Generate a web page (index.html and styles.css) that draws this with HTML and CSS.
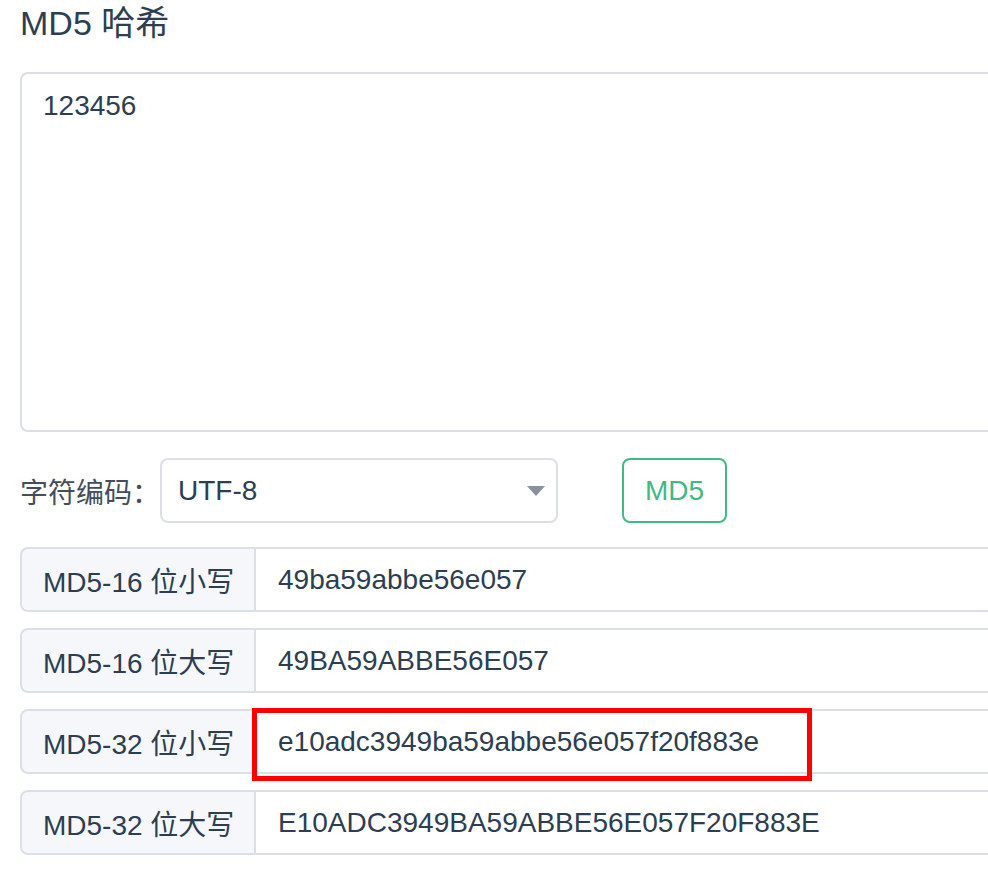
FILE: index.html
```html
<!DOCTYPE html>
<html lang="zh-CN">
<head>
<meta charset="utf-8">
<title>MD5 哈希</title>
<link rel="stylesheet" href="styles.css">
</head>
<body>
<div class="page">
  <h1 class="title">MD5 哈希</h1>
  <textarea class="source" spellcheck="false">123456</textarea>
  <div class="controls">
    <span class="enc-label">字符编码：</span>
    <div class="select">
      <span class="select-value">UTF-8</span>
      <svg class="caret" width="18" height="10" viewBox="0 0 18 10"><path d="M0 0H18L9 10Z" fill="#8b929b"/></svg>
    </div>
    <button class="btn">MD5</button>
  </div>
  <div class="results">
    <div class="row">
      <div class="prepend">MD5-16 位小写</div>
      <div class="value">49ba59abbe56e057</div>
    </div>
    <div class="row">
      <div class="prepend">MD5-16 位大写</div>
      <div class="value">49BA59ABBE56E057</div>
    </div>
    <div class="row marked">
      <div class="prepend">MD5-32 位小写</div>
      <div class="value">e10adc3949ba59abbe56e057f20f883e</div>
      <div class="mark"></div>
    </div>
    <div class="row">
      <div class="prepend">MD5-32 位大写</div>
      <div class="value">E10ADC3949BA59ABBE56E057F20F883E</div>
    </div>
  </div>
</div>
</body>
</html>
```

FILE: styles.css
```css
html, body {
  margin: 0;
  padding: 0;
  overflow: hidden;
  background: #ffffff;
}

body {
  font-family: "Liberation Sans", "Noto Sans CJK SC", sans-serif;
  color: #2c3e50;
}

.page {
  box-sizing: border-box;
  width: 988px;
  padding-left: 20px;
  display: flex;
  flex-direction: column;
}

.title {
  margin: 3px 0 0 0;
  font-size: 34px;
  line-height: 40px;
  font-weight: normal;
  color: #2c3e50;
}

.source {
  margin-top: 29px;
  box-sizing: border-box;
  width: 100%;
  height: 360px;
  border: 2px solid #dcdfe6;
  border-right: none;
  border-radius: 8px 0 0 8px;
  padding: 11px 21px;
  font-family: "Liberation Sans", "Noto Sans CJK SC", sans-serif;
  font-size: 28px;
  line-height: 42px;
  color: #2c3e50;
  resize: none;
  outline: none;
  display: block;
}

.controls {
  margin-top: 26px;
  display: flex;
  align-items: center;
  height: 65px;
}

.enc-label {
  width: 140px;
  font-size: 28px;
  color: #434e5a;
  white-space: nowrap;
}

.select {
  box-sizing: border-box;
  width: 398px;
  height: 65px;
  border: 2px solid #dcdfe6;
  border-radius: 8px;
  padding: 0 10px 0 16px;
  display: flex;
  align-items: center;
  justify-content: space-between;
}

.select-value {
  font-size: 28px;
  color: #2c3e50;
}

.caret {
  margin-right: 1px;
  display: block;
}

.btn {
  margin-left: 64px;
  box-sizing: border-box;
  height: 65px;
  padding: 0 21px;
  border: 2px solid #42b983;
  border-radius: 8px;
  background: #ffffff;
  color: #42b983;
  font-family: "Liberation Sans", "Noto Sans CJK SC", sans-serif;
  font-size: 28px;
  cursor: pointer;
}

.results {
  margin-top: 24px;
  display: flex;
  flex-direction: column;
  gap: 16px;
}

.row {
  position: relative;
  display: flex;
  height: 65px;
  width: 100%;
}

.prepend {
  box-sizing: border-box;
  width: 234px;
  flex: none;
  background: #f5f7fa;
  border: 2px solid #dcdfe6;
  border-right: none;
  border-radius: 8px 0 0 8px;
  padding-left: 21px;
  display: flex;
  align-items: center;
  font-size: 28px;
  color: #2c3e50;
  white-space: nowrap;
}

.value {
  box-sizing: border-box;
  flex: 1;
  min-width: 0;
  border: 2px solid #dcdfe6;
  border-right: none;
  padding-left: 22px;
  display: flex;
  align-items: center;
  font-size: 28px;
  color: #2c3e50;
  white-space: nowrap;
}

.mark {
  position: absolute;
  left: 232px;
  top: -1px;
  width: 560px;
  height: 73px;
  box-sizing: border-box;
  border: 5px solid #ff0000;
  pointer-events: none;
}
```
